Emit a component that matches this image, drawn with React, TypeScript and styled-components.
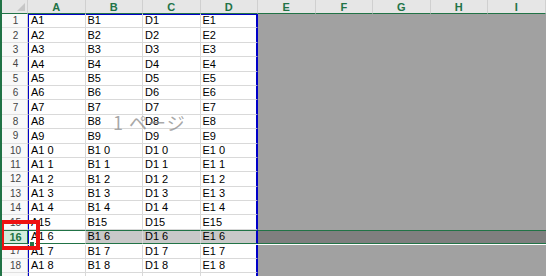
import { createGlobalStyle, styled } from "styled-components"

const GREEN = "#217346"
const BLUE = "#0000c8"
const GRID = "#d9d9d9"

const columns = ["A", "B", "C", "D", "E", "F", "G", "H", "I"]
// column C holds the D data (as in the sheet), column D holds E
const pageData = ["A", "B", "D", "E"]
const rows = Array.from({ length: 19 }, (_, i) => i + 1)
const SELECTED = 16
const LAST_VISIBLE = 18

const GlobalStyle = createGlobalStyle`
  html, body {
    margin: 0;
    padding: 0;
    background: #ffffff;
  }
`

const Label = ({ letter, row }: { letter: string; row: number }) => {
  if (row > LAST_VISIBLE) return null
  const n = String(row)
  if (n.length === 2 && row !== 15) {
    return (
      <>
        {letter}
        {n[0]}
        <Gap />
        {n[1]}
      </>
    )
  }
  return <>{letter + n}</>
}

const App = () => {
  return (
    <>
      <GlobalStyle />
      <Sheet>
        <Corner>
          <Triangle />
        </Corner>
        {columns.map((c) => (
          <ColHead key={c}>{c}</ColHead>
        ))}

        {rows.map((r) => (
          <Row key={r} r={r} />
        ))}

        <Watermark>1 ページ</Watermark>
        <FillHandle />
        <Marker />
      </Sheet>
    </>
  )
}
export default App

const Row = ({ r }: { r: number }) => {
  const sel = r === SELECTED
  return (
    <>
      <RowHead $active={sel}>{r <= LAST_VISIBLE ? r : ""}</RowHead>
      {columns.map((c, i) => {
        const page = i < 4
        return (
          <Cell
            key={c}
            $page={page}
            $first={i === 0}
            $edge={i === 3}
            $top={r === 1}
            $sel={sel}
            $active={sel && i === 0}
          >
            {page && <Label letter={pageData[i]} row={r} />}
          </Cell>
        )
      })}
    </>
  )
}

const Sheet = styled.div`
  position: relative;
  box-sizing: border-box;
  width: 549px;
  height: 276px;
  overflow: hidden;
  border-left: 2px solid ${GREEN};
  display: grid;
  grid-template-columns: 26px repeat(9, 57.5px);
  grid-template-rows: 14px repeat(19, 14.4px);
  font-family: "Liberation Sans", Arial, sans-serif;
`

const Corner = styled.div`
  position: relative;
  background: #e6e6e6;
  border-bottom: 1px solid ${GREEN};
  border-right: 1px solid #cfcfcf;
  box-sizing: border-box;
`

const Triangle = styled.div`
  position: absolute;
  right: 2px;
  bottom: 2px;
  width: 0;
  height: 0;
  border-left: 8px solid transparent;
  border-bottom: 8px solid #c6c6c6;
`

const ColHead = styled.div`
  box-sizing: border-box;
  background: #e6e6e6;
  border-bottom: 1px solid ${GREEN};
  border-right: 1px solid #d0d0d0;
  color: ${GREEN};
  font-size: 11px;
  font-weight: bold;
  display: flex;
  align-items: center;
  justify-content: center;
`

const RowHead = styled.div<{ $active?: boolean }>`
  box-sizing: border-box;
  background: ${(p) => (p.$active ? "#d3ecdc" : "#f9f9f9")};
  border-bottom: 1px solid ${(p) => (p.$active ? GREEN : "#e0e0e0")};
  border-top: ${(p) => (p.$active ? `1px solid ${GREEN}` : "none")};
  border-right: 1px solid ${(p) => (p.$active ? GREEN : "#cfcfcf")};
  color: ${(p) => (p.$active ? GREEN : "#444444")};
  font-weight: ${(p) => (p.$active ? "bold" : "normal")};
  font-size: ${(p) => (p.$active ? "11px" : "10px")};
  display: flex;
  align-items: center;
  justify-content: center;
  padding-left: 2px;
`

const Cell = styled.div<{
  $page: boolean
  $first?: boolean
  $edge?: boolean
  $top?: boolean
  $sel?: boolean
  $active?: boolean
}>`
  box-sizing: border-box;
  min-width: 0;
  overflow: hidden;
  white-space: nowrap;
  display: flex;
  align-items: flex-end;
  padding: 0 0 1px 2px;
  font-size: 11px;
  line-height: 12px;
  color: #000000;
  background: ${(p) =>
    p.$page
      ? p.$sel && !p.$active
        ? "#c8c8c8"
        : "#ffffff"
      : p.$sel
        ? "#7f7f7f"
        : "#a1a1a1"};
  border-right: ${(p) =>
    p.$edge ? `2px solid ${BLUE}` : p.$page ? `1px solid ${GRID}` : "none"};
  border-left: ${(p) => (p.$first ? `1px solid ${BLUE}` : "none")};
  border-top: ${(p) => (p.$sel ? `1px solid ${GREEN}` : "none")};
  border-bottom: ${(p) =>
    p.$sel ? `1px solid ${GREEN}` : p.$page ? `1px solid ${GRID}` : "none"};
  box-shadow: ${(p) =>
    p.$top && p.$page
      ? `inset 0 1px 0 ${BLUE}`
      : p.$sel
        ? "0 1px 0 #ffffff"
        : "none"};
  z-index: ${(p) => (p.$sel ? 1 : 0)};
`

const Gap = styled.span`
  display: inline-block;
  width: 3px;
`

const Watermark = styled.div`
  position: absolute;
  left: 111px;
  top: 109px;
  font-family: "Noto Sans CJK JP", sans-serif;
  font-size: 18px;
  color: rgba(140, 140, 140, 0.75);
  letter-spacing: 1px;
  pointer-events: none;
  z-index: 2;
`

const FillHandle = styled.div`
  position: absolute;
  left: 27px;
  top: 241px;
  width: 4px;
  height: 4px;
  background: ${GREEN};
  border: 1px solid #ffffff;
  z-index: 3;
`

const Marker = styled.div`
  position: absolute;
  left: -2px;
  top: 220px;
  width: 40px;
  height: 30px;
  box-sizing: border-box;
  border: 4px solid #ee1111;
  z-index: 4;
`
